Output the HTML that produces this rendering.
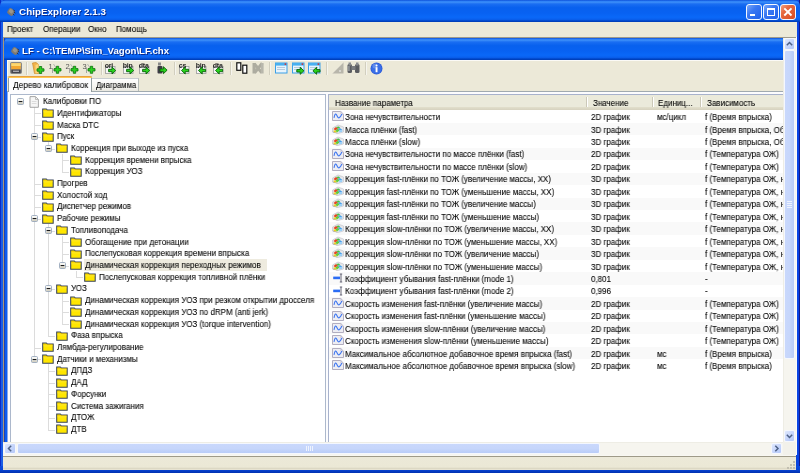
<!DOCTYPE html><html><head><meta charset="utf-8"><style>
*{margin:0;padding:0}
html,body{width:800px;height:473px;overflow:hidden;background:#ece9d8;position:relative;font-family:"Liberation Sans", sans-serif;}
.t{position:absolute;white-space:nowrap;font-size:8.5px;line-height:10px;color:#000;transform:scaleX(0.94);transform-origin:0 0;will-change:transform;-webkit-text-stroke:0.15px rgba(0,0,0,0.55)}
svg{position:absolute;display:block;overflow:visible;will-change:transform}
</style></head><body><div style="position:absolute;left:0px;top:0px;width:800px;height:473px;background:linear-gradient(90deg,#0a2cc8 0,#0a2cc8 1px,#1a5ee6 1.5px,#1a5ee6 3px,#0a46d8 3px,#0a46d8 797px,#0a44e4 797px,#0a44e4 798.5px,#101a90 799px);"></div>
<div style="position:absolute;left:0px;top:0px;width:800px;height:22px;background:linear-gradient(180deg,#0a4ad4 0%,#2a7ef6 5%,#3c8ef8 10%,#1a6ef2 18%,#0860ee 35%,#0862f2 60%,#0a68f8 78%,#0a60ee 88%,#0046c8 95%,#003ab0 100%);border-radius:6px 6px 0 0;"></div>
<svg style="left:5.5px;top:7px" width="10" height="10" viewBox="0 0 10 10"><rect x="1.6" y="1.8" width="6.8" height="6.4" rx="2" transform="rotate(35 5 5)" fill="#7c7872"/><rect x="2.6" y="2.6" width="4" height="3.6" rx="1.2" transform="rotate(35 5 5)" fill="#9a968c"/><path d="M7.5 3 L9 4.2 M8 5 L9.4 6.2 M7 7 L8.4 8.2" stroke="#2a2a40" stroke-width="0.9"/></svg>
<div class="t" style="left:19px;top:6.3px;font-weight:bold;font-size:9.8px;letter-spacing:0.06px;line-height:12px;color:#fff;text-shadow:1px 1px 0 #0a2a8a;transform:none;-webkit-text-stroke:0">ChipExplorer 2.1.3</div>
<div style="position:absolute;left:746px;top:3.5px;width:15.5px;height:16px;background:linear-gradient(135deg,#7aa8f8 0%,#3a78f2 40%,#2060ea 100%);border:1px solid #f4f8ff;border-radius:3px;box-sizing:border-box;"></div>
<div style="position:absolute;left:750px;top:13.5px;width:5px;height:2px;background:#fff;"></div>
<div style="position:absolute;left:763px;top:3.5px;width:15.5px;height:16px;background:linear-gradient(135deg,#7aa8f8 0%,#3a78f2 40%,#2060ea 100%);border:1px solid #f4f8ff;border-radius:3px;box-sizing:border-box;"></div>
<div style="position:absolute;left:766.8px;top:7.5px;width:8px;height:8px;border:1px solid #fff;border-top-width:2px;box-sizing:border-box;"></div>
<div style="position:absolute;left:780px;top:3.5px;width:15.5px;height:16px;background:linear-gradient(135deg,#f2a080 0%,#e6683e 35%,#d84c22 100%);border:1px solid #f4f8ff;border-radius:3px;box-sizing:border-box;"></div>
<svg style="left:780px;top:3.5px" width="16" height="16" viewBox="0 0 16 16"><path d="M4.3 4.3L11.5 11.5M11.5 4.3L4.3 11.5" stroke="#fff" stroke-width="1.9"/></svg>
<div style="position:absolute;left:3px;top:22px;width:794px;height:15px;background:#ece9d8;"></div>
<div class="t" style="left:7px;top:24.2px;">Проект</div>
<div class="t" style="left:43px;top:24.2px;">Операции</div>
<div class="t" style="left:88px;top:24.2px;">Окно</div>
<div class="t" style="left:116px;top:24.2px;">Помощь</div>
<div style="position:absolute;left:3px;top:37px;width:793px;height:1px;background:#9d9a8b;"></div>
<div style="position:absolute;left:3px;top:38px;width:793px;height:404px;background:#ece9d8;"></div>
<div style="position:absolute;left:3px;top:38px;width:780px;height:404px;background:linear-gradient(90deg,#a89878 0,#a89878 1px,#2040b0 1px,#2040b0 2px,#0a5cf0 2px);"></div>
<div style="position:absolute;left:4px;top:38px;width:779px;height:22px;background:linear-gradient(180deg,#0a4ad4 0%,#2a7ef6 5%,#3c8ef8 10%,#1a6ef2 18%,#0860ee 35%,#0862f2 60%,#0a68f8 78%,#0a60ee 88%,#0046c8 95%,#003ab0 100%);border-radius:5px 0 0 0;"></div>
<svg style="left:10px;top:45.5px" width="10" height="10" viewBox="0 0 10 10"><rect x="1.6" y="1.8" width="6.8" height="6.4" rx="2" transform="rotate(35 5 5)" fill="#7c7872"/><rect x="2.6" y="2.6" width="4" height="3.6" rx="1.2" transform="rotate(35 5 5)" fill="#9a968c"/><path d="M7.5 3 L9 4.2 M8 5 L9.4 6.2 M7 7 L8.4 8.2" stroke="#2a2a40" stroke-width="0.9"/></svg>
<div class="t" style="left:22px;top:45px;font-weight:bold;font-size:9.65px;letter-spacing:0px;line-height:12px;color:#fff;text-shadow:1px 1px 0 #0a2a8a;transform:none;-webkit-text-stroke:0">LF - C:\TEMP\Sim_Vagon\LF.chx</div>
<div style="position:absolute;left:7px;top:60px;width:776px;height:382px;background:#ece9d8;"></div>
<div style="position:absolute;left:7px;top:60px;width:776px;height:16px;background:#ece9d8;border-top:1px solid #fbfaf6;border-left:1px solid #fbfaf6;box-sizing:border-box;"></div>
<svg style="left:9.8px;top:62px" width="12" height="12" viewBox="0 0 12 12"><rect x="0.5" y="0.5" width="11" height="11" rx="1" fill="#9a9a9a" stroke="#7a7a7a" stroke-width="0.8"/><rect x="1.3" y="1.2" width="9.4" height="6.3" fill="#f4a830"/><rect x="1.3" y="1.2" width="9.4" height="2.8" fill="#fcd870"/><rect x="1.3" y="7.5" width="9.4" height="3.5" fill="#45454c"/><rect x="3" y="8.6" width="6" height="1.4" fill="#a8a8b0"/></svg>
<svg style="left:32px;top:62px" width="13" height="12" viewBox="0 0 13 12"><path d="M0.5 1 L4 0.5 L6.5 2.5 L6.5 11.5 L2.5 11.5 Z" fill="#f3b44a" stroke="#c98a28" stroke-width="0.7"/><path d="M3.5 3 L6.5 2 L6.5 11 L3.5 11.5Z" fill="#fcd77a"/><path d="M5.0 6.8h2.3v-2.3h2.4v2.3h2.3v2.4h-2.3v2.3h-2.4v-2.3h-2.3z" fill="#2ad020" stroke="#0b700b" stroke-width="0.8"/></svg>
<svg style="left:48.75px;top:62px" width="13" height="12" viewBox="0 0 13 12"><text x="-0.5" y="6.5" font-family="Liberation Sans" font-size="7.5" fill="#555">1</text><path d="M4.5 2 L7 6" stroke="#a8a8a8" stroke-width="0.8"/><path d="M3.5 6 L3.5 11" stroke="#909090" stroke-width="0.8"/><path d="M5.0 6.6h2.3v-2.3h2.4v2.3h2.3v2.4h-2.3v2.3h-2.4v-2.3h-2.3z" fill="#2ad020" stroke="#0b700b" stroke-width="0.8"/></svg>
<svg style="left:65.6px;top:62px" width="13" height="12" viewBox="0 0 13 12"><text x="-0.5" y="6.5" font-family="Liberation Sans" font-size="7.5" fill="#555">2</text><path d="M4.5 2 L7 6" stroke="#a8a8a8" stroke-width="0.8"/><path d="M3.5 6 L3.5 11" stroke="#909090" stroke-width="0.8"/><path d="M5.0 6.6h2.3v-2.3h2.4v2.3h2.3v2.4h-2.3v2.3h-2.4v-2.3h-2.3z" fill="#2ad020" stroke="#0b700b" stroke-width="0.8"/></svg>
<svg style="left:82.5px;top:62px" width="13" height="12" viewBox="0 0 13 12"><text x="-0.5" y="6.5" font-family="Liberation Sans" font-size="7.5" fill="#555">3</text><path d="M4.5 2 L7 6" stroke="#a8a8a8" stroke-width="0.8"/><path d="M3.5 6 L3.5 11" stroke="#909090" stroke-width="0.8"/><path d="M5.0 6.6h2.3v-2.3h2.4v2.3h2.3v2.4h-2.3v2.3h-2.4v-2.3h-2.3z" fill="#2ad020" stroke="#0b700b" stroke-width="0.8"/></svg>
<svg style="left:105.4px;top:62px" width="13" height="12" viewBox="0 0 13 12"><rect x="0.5" y="4.5" width="9.5" height="7" fill="#f6f6f6" stroke="#9a9a9a" stroke-width="0.8"/><text x="-0.3" y="5.6" font-family="Liberation Sans" font-weight="bold" font-size="7" letter-spacing="-0.2" fill="#2a2a2a">ori</text><path d="M3.6 7.3h3.4v-2.3l3.7 3.5l-3.7 3.5v-2.3h-3.4z" fill="#2ad41e" stroke="#086008" stroke-width="0.9"/></svg>
<svg style="left:122.5px;top:62px" width="13" height="12" viewBox="0 0 13 12"><rect x="0.5" y="4.5" width="9.5" height="7" fill="#f6f6f6" stroke="#9a9a9a" stroke-width="0.8"/><text x="-0.3" y="5.6" font-family="Liberation Sans" font-weight="bold" font-size="7" letter-spacing="-0.2" fill="#2a2a2a">bin</text><path d="M3.6 7.3h3.4v-2.3l3.7 3.5l-3.7 3.5v-2.3h-3.4z" fill="#2ad41e" stroke="#086008" stroke-width="0.9"/></svg>
<svg style="left:139.4px;top:62px" width="13" height="12" viewBox="0 0 13 12"><rect x="0.5" y="4.5" width="9.5" height="7" fill="#f6f6f6" stroke="#9a9a9a" stroke-width="0.8"/><text x="-0.3" y="5.6" font-family="Liberation Sans" font-weight="bold" font-size="7" letter-spacing="-0.2" fill="#2a2a2a">dta</text><path d="M3.6 7.3h3.4v-2.3l3.7 3.5l-3.7 3.5v-2.3h-3.4z" fill="#2ad41e" stroke="#086008" stroke-width="0.9"/></svg>
<svg style="left:157px;top:62px" width="12" height="12" viewBox="0 0 12 12"><rect x="1" y="0.5" width="3" height="3" fill="#8a8a8a"/><rect x="0.5" y="4" width="5" height="7.5" rx="1" fill="#3c3c44"/><path d="M3 7.0h3.4v-2.3l3.7 3.5l-3.7 3.5v-2.3h-3.4z" fill="#2ad41e" stroke="#086008" stroke-width="0.9"/></svg>
<svg style="left:178.75px;top:62px" width="13" height="12" viewBox="0 0 13 12"><rect x="0.5" y="4.5" width="9.5" height="7" fill="#f6f6f6" stroke="#9a9a9a" stroke-width="0.8"/><text x="-0.3" y="5.6" font-family="Liberation Sans" font-weight="bold" font-size="7" letter-spacing="-0.2" fill="#2a2a2a">cs</text><path d="M9.600000000000001 7.3h-3.4v-2.3l-3.7 3.5l3.7 3.5v-2.3h3.4z" fill="#2ad41e" stroke="#086008" stroke-width="0.9"/></svg>
<svg style="left:195.6px;top:62px" width="13" height="12" viewBox="0 0 13 12"><rect x="0.5" y="4.5" width="9.5" height="7" fill="#f6f6f6" stroke="#9a9a9a" stroke-width="0.8"/><text x="-0.3" y="5.6" font-family="Liberation Sans" font-weight="bold" font-size="7" letter-spacing="-0.2" fill="#2a2a2a">bin</text><path d="M9.600000000000001 7.3h-3.4v-2.3l-3.7 3.5l3.7 3.5v-2.3h3.4z" fill="#2ad41e" stroke="#086008" stroke-width="0.9"/></svg>
<svg style="left:212.5px;top:62px" width="13" height="12" viewBox="0 0 13 12"><rect x="0.5" y="4.5" width="9.5" height="7" fill="#f6f6f6" stroke="#9a9a9a" stroke-width="0.8"/><text x="-0.3" y="5.6" font-family="Liberation Sans" font-weight="bold" font-size="7" letter-spacing="-0.2" fill="#2a2a2a">dta</text><path d="M9.600000000000001 7.3h-3.4v-2.3l-3.7 3.5l3.7 3.5v-2.3h3.4z" fill="#2ad41e" stroke="#086008" stroke-width="0.9"/></svg>
<svg style="left:235.6px;top:62px" width="12" height="12" viewBox="0 0 12 12"><rect x="0.8" y="0.8" width="4" height="7.5" fill="#fff" stroke="#111" stroke-width="1.2"/><rect x="6.8" y="3.2" width="4" height="8" fill="#fff" stroke="#111" stroke-width="1.2"/></svg>
<svg style="left:251.9px;top:62px" width="12" height="12" viewBox="0 0 12 12"><path d="M0.5 1h3.2v10.5h-3.2z" fill="#adaca0"/><path d="M2.2 1.6 L9.8 10.8 M10.2 1.2 L2.6 10.8" stroke="#adaca0" stroke-width="3"/><path d="M9 1h2.6v10.5h-2.6z" fill="#b8b7ac"/></svg>
<svg style="left:275.2px;top:62px" width="13" height="12" viewBox="0 0 13 12"><rect x="0.5" y="1" width="11.5" height="10" fill="#e8f4fc" stroke="#3aa0e8" stroke-width="1"/><rect x="0.5" y="1" width="11.5" height="2.6" fill="#48b0f0"/><rect x="9.6" y="1.4" width="1.6" height="1.4" fill="#e02020"/><path d="M2 5.5h8M2 7.5h8" stroke="#a0b8d0" stroke-width="0.7"/></svg>
<svg style="left:291.7px;top:62px" width="13" height="12" viewBox="0 0 13 12"><rect x="0.5" y="1" width="11.5" height="10" fill="#e8f4fc" stroke="#3aa0e8" stroke-width="1"/><rect x="0.5" y="1" width="11.5" height="2.6" fill="#48b0f0"/><rect x="9.6" y="1.4" width="1.6" height="1.4" fill="#e02020"/><path d="M2 5.5h8M2 7.5h8" stroke="#a0b8d0" stroke-width="0.7"/><path d="M4.8 7.6h3.4v-2.3l3.7 3.5l-3.7 3.5v-2.3h-3.4z" fill="#2ad41e" stroke="#086008" stroke-width="0.9"/></svg>
<svg style="left:308.2px;top:62px" width="13" height="12" viewBox="0 0 13 12"><rect x="0.5" y="1" width="11.5" height="10" fill="#e8f4fc" stroke="#3aa0e8" stroke-width="1"/><rect x="0.5" y="1" width="11.5" height="2.6" fill="#48b0f0"/><rect x="9.6" y="1.4" width="1.6" height="1.4" fill="#e02020"/><path d="M2 5.5h8M2 7.5h8" stroke="#a0b8d0" stroke-width="0.7"/><path d="M12.0 7.6h-3.4v-2.3l-3.7 3.5l3.7 3.5v-2.3h3.4z" fill="#2ad41e" stroke="#086008" stroke-width="0.9"/></svg>
<svg style="left:331.5px;top:62px" width="12" height="12" viewBox="0 0 12 12"><path d="M11.5 0.5 V11.5 H0.5 Z" fill="#b8b6ab"/><path d="M11.5 0.5 L0.5 11.5" stroke="#d6d4ca" stroke-width="0.6"/><circle cx="8" cy="9" r="0.8" fill="#fff"/></svg>
<svg style="left:347.2px;top:62px" width="13" height="12" viewBox="0 0 13 12"><rect x="0.5" y="2" width="4.5" height="9" rx="1.5" fill="#5a5c60"/><rect x="8" y="2" width="4.5" height="9" rx="1.5" fill="#5a5c60"/><rect x="4.5" y="4" width="4" height="4" fill="#7a7c80"/><rect x="1.5" y="0.5" width="2.5" height="3" fill="#8a8c90"/><rect x="9" y="0.5" width="2.5" height="3" fill="#8a8c90"/><rect x="1.3" y="4" width="1.3" height="5" fill="#a0a4a8"/></svg>
<svg style="left:370.4px;top:61.5px" width="13" height="13" viewBox="0 0 13 13"><circle cx="6.5" cy="6.5" r="6" fill="#2a5ad8"/><circle cx="6.5" cy="6.5" r="5.2" fill="#3a6ee6"/><circle cx="5" cy="4" r="2.5" fill="#7aa0f0" opacity="0.6"/><rect x="5.6" y="5.2" width="1.9" height="5" fill="#fff"/><circle cx="6.55" cy="3.4" r="1" fill="#fff"/></svg>
<div style="position:absolute;left:25.6px;top:61.5px;width:1px;height:13px;background:#d2cfbf;border-right:1px solid #f6f5ee;"></div>
<div style="position:absolute;left:101px;top:61.5px;width:1px;height:13px;background:#d2cfbf;border-right:1px solid #f6f5ee;"></div>
<div style="position:absolute;left:173.75px;top:61.5px;width:1px;height:13px;background:#d2cfbf;border-right:1px solid #f6f5ee;"></div>
<div style="position:absolute;left:230px;top:61.5px;width:1px;height:13px;background:#d2cfbf;border-right:1px solid #f6f5ee;"></div>
<div style="position:absolute;left:269.4px;top:61.5px;width:1px;height:13px;background:#d2cfbf;border-right:1px solid #f6f5ee;"></div>
<div style="position:absolute;left:325.5px;top:61.5px;width:1px;height:13px;background:#d2cfbf;border-right:1px solid #f6f5ee;"></div>
<div style="position:absolute;left:365.2px;top:61.5px;width:1px;height:13px;background:#d2cfbf;border-right:1px solid #f6f5ee;"></div>
<div style="position:absolute;left:7px;top:91px;width:776px;height:1px;background:#a0aab0;"></div>
<div style="position:absolute;left:7px;top:92px;width:776px;height:350px;background:linear-gradient(90deg,#4a7ee8 0,#c8d4f0 1px,#fcfcfe 1px);"></div>
<div style="position:absolute;left:8px;top:76px;width:84px;height:16px;background:#fcfcfe;border:1px solid #919b9c;border-bottom:none;border-top:none;border-radius:2px 2px 0 0;box-sizing:border-box;"></div>
<div style="position:absolute;left:8px;top:76px;width:84px;height:2px;background:linear-gradient(180deg,#e8a040 0 1px,#ffc850 1px 2px);border-radius:2px 2px 0 0;"></div>
<div style="position:absolute;left:92px;top:78px;width:47px;height:13px;background:linear-gradient(#fefefe,#f4f3ee 70%,#e8e7e0);border:1px solid #b6bbb8;border-bottom:none;border-left:none;border-top:1px solid #c8cdd0;box-sizing:border-box;"></div>
<div class="t" style="left:13px;top:80px;transform:scaleX(0.975)">Дерево калибровок</div>
<div class="t" style="left:95.7px;top:79.6px;transform:scaleX(0.91)">Диаграмма</div>
<div style="position:absolute;left:10px;top:94px;width:316px;height:348px;background:#fff;border:1px solid #acb8cc;border-bottom:none;box-sizing:border-box;"></div>
<div style="position:absolute;left:328px;top:94px;width:455px;height:348px;background:#fff;border:1px solid #a8b2cc;border-bottom:none;border-right:none;box-sizing:border-box;"></div>
<div style="position:absolute;left:329px;top:95px;width:454px;height:15px;background:linear-gradient(180deg,#ebeadb 0,#ebeadb 12px,#e2dfcc 12px,#d6d2bf 15px);"></div>
<div style="position:absolute;left:0;top:0;width:783px;height:442px;overflow:hidden">
<div class="t" style="left:335px;top:98.3px;">Название параметра</div>
<div class="t" style="left:593px;top:98.3px;">Значение</div>
<div class="t" style="left:658px;top:98.3px;">Единиц...</div>
<div class="t" style="left:707px;top:98.3px;">Зависимость</div>
<div style="position:absolute;left:585.5px;top:97px;width:1px;height:10px;background:#cbc8b8;border-right:1px solid #fff;"></div>
<div style="position:absolute;left:651.5px;top:97px;width:1px;height:10px;background:#cbc8b8;border-right:1px solid #fff;"></div>
<div style="position:absolute;left:699.5px;top:97px;width:1px;height:10px;background:#cbc8b8;border-right:1px solid #fff;"></div>
<svg style="left:332px;top:111.3px" width="12" height="10" viewBox="0 0 12 10"><path d="M0.5 0.5 H8.8 L11.5 3.2 V9.5 H0.5 Z" fill="#ededf3" stroke="#aaa6ba" stroke-width="0.9"/><path d="M8.8 0.5 V3.2 H11.5" fill="none" stroke="#c4c0d0" stroke-width="0.7"/><path d="M2 6.8 C2.9 2.2,4 2,5 4.8 S7.6 8.2,9.9 3" fill="none" stroke="#4078f0" stroke-width="1.1"/></svg>
<div class="t" style="left:345px;top:112.1px;">Зона нечувствительности</div>
<div class="t" style="left:591px;top:112.1px;">2D график</div>
<div class="t" style="left:656.5px;top:112.1px;">мс/цикл</div>
<div class="t" style="left:704.6px;top:112.1px;">f (Время впрыска)</div>
<div style="position:absolute;left:329px;top:122.85px;width:454px;height:12.45px;background:#f9f9f9;"></div>
<svg style="left:332px;top:123.75px" width="12" height="10" viewBox="0 0 12 10"><path d="M0.5 4 L6 1 L11.5 3 V8 L6 9.5 L0.5 8 Z" fill="#e6e6ea" stroke="#c0c0c8" stroke-width="0.6"/><path d="M0.8 7.5 L5.5 9.2 L5.5 9.6 L0.8 8.3Z" fill="#9a9a9a"/><path d="M1.5 5 L4 3 L6 4.5 L3.5 6.5 Z" fill="#e84422"/><path d="M1.5 6.5 L3.5 6.5 L5 8.6 L2 8.2 Z" fill="#f0d020"/><path d="M4 3 L7 2.5 L8.5 4.5 L6 4.5 Z" fill="#48c040"/><path d="M3.5 6.5 L6 4.5 L7.5 6.5 L5 8.6 Z" fill="#60cc40"/><path d="M6 4.5 L8.5 4.5 L10.5 6 L7.5 6.5 Z" fill="#48a0f0"/><path d="M7.5 6.5 L10.5 6 L10 8 L6.8 8.4 Z" fill="#98d0f8"/></svg>
<div class="t" style="left:345px;top:124.55px;">Масса плёнки (fast)</div>
<div class="t" style="left:591px;top:124.55px;">3D график</div>
<div class="t" style="left:704.6px;top:124.55px;">f (Время впрыска, Об</div>
<svg style="left:332px;top:136.2px" width="12" height="10" viewBox="0 0 12 10"><path d="M0.5 4 L6 1 L11.5 3 V8 L6 9.5 L0.5 8 Z" fill="#e6e6ea" stroke="#c0c0c8" stroke-width="0.6"/><path d="M0.8 7.5 L5.5 9.2 L5.5 9.6 L0.8 8.3Z" fill="#9a9a9a"/><path d="M1.5 5 L4 3 L6 4.5 L3.5 6.5 Z" fill="#e84422"/><path d="M1.5 6.5 L3.5 6.5 L5 8.6 L2 8.2 Z" fill="#f0d020"/><path d="M4 3 L7 2.5 L8.5 4.5 L6 4.5 Z" fill="#48c040"/><path d="M3.5 6.5 L6 4.5 L7.5 6.5 L5 8.6 Z" fill="#60cc40"/><path d="M6 4.5 L8.5 4.5 L10.5 6 L7.5 6.5 Z" fill="#48a0f0"/><path d="M7.5 6.5 L10.5 6 L10 8 L6.8 8.4 Z" fill="#98d0f8"/></svg>
<div class="t" style="left:345px;top:137.0px;">Масса плёнки (slow)</div>
<div class="t" style="left:591px;top:137.0px;">3D график</div>
<div class="t" style="left:704.6px;top:137.0px;">f (Время впрыска, Об</div>
<div style="position:absolute;left:329px;top:147.75px;width:454px;height:12.45px;background:#f9f9f9;"></div>
<svg style="left:332px;top:148.65px" width="12" height="10" viewBox="0 0 12 10"><path d="M0.5 0.5 H8.8 L11.5 3.2 V9.5 H0.5 Z" fill="#ededf3" stroke="#aaa6ba" stroke-width="0.9"/><path d="M8.8 0.5 V3.2 H11.5" fill="none" stroke="#c4c0d0" stroke-width="0.7"/><path d="M2 6.8 C2.9 2.2,4 2,5 4.8 S7.6 8.2,9.9 3" fill="none" stroke="#4078f0" stroke-width="1.1"/></svg>
<div class="t" style="left:345px;top:149.45px;">Зона нечувствительности по массе плёнки (fast)</div>
<div class="t" style="left:591px;top:149.45px;">2D график</div>
<div class="t" style="left:704.6px;top:149.45px;">f (Температура ОЖ)</div>
<svg style="left:332px;top:161.1px" width="12" height="10" viewBox="0 0 12 10"><path d="M0.5 0.5 H8.8 L11.5 3.2 V9.5 H0.5 Z" fill="#ededf3" stroke="#aaa6ba" stroke-width="0.9"/><path d="M8.8 0.5 V3.2 H11.5" fill="none" stroke="#c4c0d0" stroke-width="0.7"/><path d="M2 6.8 C2.9 2.2,4 2,5 4.8 S7.6 8.2,9.9 3" fill="none" stroke="#4078f0" stroke-width="1.1"/></svg>
<div class="t" style="left:345px;top:161.9px;">Зона нечувствительности по массе плёнки (slow)</div>
<div class="t" style="left:591px;top:161.9px;">2D график</div>
<div class="t" style="left:704.6px;top:161.9px;">f (Температура ОЖ)</div>
<div style="position:absolute;left:329px;top:172.65px;width:454px;height:12.45px;background:#f9f9f9;"></div>
<svg style="left:332px;top:173.55px" width="12" height="10" viewBox="0 0 12 10"><path d="M0.5 4 L6 1 L11.5 3 V8 L6 9.5 L0.5 8 Z" fill="#e6e6ea" stroke="#c0c0c8" stroke-width="0.6"/><path d="M0.8 7.5 L5.5 9.2 L5.5 9.6 L0.8 8.3Z" fill="#9a9a9a"/><path d="M1.5 5 L4 3 L6 4.5 L3.5 6.5 Z" fill="#e84422"/><path d="M1.5 6.5 L3.5 6.5 L5 8.6 L2 8.2 Z" fill="#f0d020"/><path d="M4 3 L7 2.5 L8.5 4.5 L6 4.5 Z" fill="#48c040"/><path d="M3.5 6.5 L6 4.5 L7.5 6.5 L5 8.6 Z" fill="#60cc40"/><path d="M6 4.5 L8.5 4.5 L10.5 6 L7.5 6.5 Z" fill="#48a0f0"/><path d="M7.5 6.5 L10.5 6 L10 8 L6.8 8.4 Z" fill="#98d0f8"/></svg>
<div class="t" style="left:345px;top:174.35px;">Коррекция fast-плёнки по ТОЖ (увеличение массы, XX)</div>
<div class="t" style="left:591px;top:174.35px;">3D график</div>
<div class="t" style="left:704.6px;top:174.35px;">f (Температура ОЖ, н</div>
<svg style="left:332px;top:186.0px" width="12" height="10" viewBox="0 0 12 10"><path d="M0.5 4 L6 1 L11.5 3 V8 L6 9.5 L0.5 8 Z" fill="#e6e6ea" stroke="#c0c0c8" stroke-width="0.6"/><path d="M0.8 7.5 L5.5 9.2 L5.5 9.6 L0.8 8.3Z" fill="#9a9a9a"/><path d="M1.5 5 L4 3 L6 4.5 L3.5 6.5 Z" fill="#e84422"/><path d="M1.5 6.5 L3.5 6.5 L5 8.6 L2 8.2 Z" fill="#f0d020"/><path d="M4 3 L7 2.5 L8.5 4.5 L6 4.5 Z" fill="#48c040"/><path d="M3.5 6.5 L6 4.5 L7.5 6.5 L5 8.6 Z" fill="#60cc40"/><path d="M6 4.5 L8.5 4.5 L10.5 6 L7.5 6.5 Z" fill="#48a0f0"/><path d="M7.5 6.5 L10.5 6 L10 8 L6.8 8.4 Z" fill="#98d0f8"/></svg>
<div class="t" style="left:345px;top:186.8px;">Коррекция fast-плёнки по ТОЖ (уменьшение массы, XX)</div>
<div class="t" style="left:591px;top:186.8px;">3D график</div>
<div class="t" style="left:704.6px;top:186.8px;">f (Температура ОЖ, н</div>
<div style="position:absolute;left:329px;top:197.55px;width:454px;height:12.45px;background:#f9f9f9;"></div>
<svg style="left:332px;top:198.45px" width="12" height="10" viewBox="0 0 12 10"><path d="M0.5 4 L6 1 L11.5 3 V8 L6 9.5 L0.5 8 Z" fill="#e6e6ea" stroke="#c0c0c8" stroke-width="0.6"/><path d="M0.8 7.5 L5.5 9.2 L5.5 9.6 L0.8 8.3Z" fill="#9a9a9a"/><path d="M1.5 5 L4 3 L6 4.5 L3.5 6.5 Z" fill="#e84422"/><path d="M1.5 6.5 L3.5 6.5 L5 8.6 L2 8.2 Z" fill="#f0d020"/><path d="M4 3 L7 2.5 L8.5 4.5 L6 4.5 Z" fill="#48c040"/><path d="M3.5 6.5 L6 4.5 L7.5 6.5 L5 8.6 Z" fill="#60cc40"/><path d="M6 4.5 L8.5 4.5 L10.5 6 L7.5 6.5 Z" fill="#48a0f0"/><path d="M7.5 6.5 L10.5 6 L10 8 L6.8 8.4 Z" fill="#98d0f8"/></svg>
<div class="t" style="left:345px;top:199.25px;">Коррекция fast-плёнки по ТОЖ (увеличение массы)</div>
<div class="t" style="left:591px;top:199.25px;">3D график</div>
<div class="t" style="left:704.6px;top:199.25px;">f (Температура ОЖ, н</div>
<svg style="left:332px;top:210.9px" width="12" height="10" viewBox="0 0 12 10"><path d="M0.5 4 L6 1 L11.5 3 V8 L6 9.5 L0.5 8 Z" fill="#e6e6ea" stroke="#c0c0c8" stroke-width="0.6"/><path d="M0.8 7.5 L5.5 9.2 L5.5 9.6 L0.8 8.3Z" fill="#9a9a9a"/><path d="M1.5 5 L4 3 L6 4.5 L3.5 6.5 Z" fill="#e84422"/><path d="M1.5 6.5 L3.5 6.5 L5 8.6 L2 8.2 Z" fill="#f0d020"/><path d="M4 3 L7 2.5 L8.5 4.5 L6 4.5 Z" fill="#48c040"/><path d="M3.5 6.5 L6 4.5 L7.5 6.5 L5 8.6 Z" fill="#60cc40"/><path d="M6 4.5 L8.5 4.5 L10.5 6 L7.5 6.5 Z" fill="#48a0f0"/><path d="M7.5 6.5 L10.5 6 L10 8 L6.8 8.4 Z" fill="#98d0f8"/></svg>
<div class="t" style="left:345px;top:211.7px;">Коррекция fast-плёнки по ТОЖ (уменьшение массы)</div>
<div class="t" style="left:591px;top:211.7px;">3D график</div>
<div class="t" style="left:704.6px;top:211.7px;">f (Температура ОЖ, н</div>
<div style="position:absolute;left:329px;top:222.45px;width:454px;height:12.45px;background:#f9f9f9;"></div>
<svg style="left:332px;top:223.35px" width="12" height="10" viewBox="0 0 12 10"><path d="M0.5 4 L6 1 L11.5 3 V8 L6 9.5 L0.5 8 Z" fill="#e6e6ea" stroke="#c0c0c8" stroke-width="0.6"/><path d="M0.8 7.5 L5.5 9.2 L5.5 9.6 L0.8 8.3Z" fill="#9a9a9a"/><path d="M1.5 5 L4 3 L6 4.5 L3.5 6.5 Z" fill="#e84422"/><path d="M1.5 6.5 L3.5 6.5 L5 8.6 L2 8.2 Z" fill="#f0d020"/><path d="M4 3 L7 2.5 L8.5 4.5 L6 4.5 Z" fill="#48c040"/><path d="M3.5 6.5 L6 4.5 L7.5 6.5 L5 8.6 Z" fill="#60cc40"/><path d="M6 4.5 L8.5 4.5 L10.5 6 L7.5 6.5 Z" fill="#48a0f0"/><path d="M7.5 6.5 L10.5 6 L10 8 L6.8 8.4 Z" fill="#98d0f8"/></svg>
<div class="t" style="left:345px;top:224.15px;">Коррекция slow-плёнки по ТОЖ (увеличение массы, XX)</div>
<div class="t" style="left:591px;top:224.15px;">3D график</div>
<div class="t" style="left:704.6px;top:224.15px;">f (Температура ОЖ, н</div>
<svg style="left:332px;top:235.8px" width="12" height="10" viewBox="0 0 12 10"><path d="M0.5 4 L6 1 L11.5 3 V8 L6 9.5 L0.5 8 Z" fill="#e6e6ea" stroke="#c0c0c8" stroke-width="0.6"/><path d="M0.8 7.5 L5.5 9.2 L5.5 9.6 L0.8 8.3Z" fill="#9a9a9a"/><path d="M1.5 5 L4 3 L6 4.5 L3.5 6.5 Z" fill="#e84422"/><path d="M1.5 6.5 L3.5 6.5 L5 8.6 L2 8.2 Z" fill="#f0d020"/><path d="M4 3 L7 2.5 L8.5 4.5 L6 4.5 Z" fill="#48c040"/><path d="M3.5 6.5 L6 4.5 L7.5 6.5 L5 8.6 Z" fill="#60cc40"/><path d="M6 4.5 L8.5 4.5 L10.5 6 L7.5 6.5 Z" fill="#48a0f0"/><path d="M7.5 6.5 L10.5 6 L10 8 L6.8 8.4 Z" fill="#98d0f8"/></svg>
<div class="t" style="left:345px;top:236.6px;">Коррекция slow-плёнки по ТОЖ (уменьшение массы, XX)</div>
<div class="t" style="left:591px;top:236.6px;">3D график</div>
<div class="t" style="left:704.6px;top:236.6px;">f (Температура ОЖ, н</div>
<div style="position:absolute;left:329px;top:247.35px;width:454px;height:12.45px;background:#f9f9f9;"></div>
<svg style="left:332px;top:248.25px" width="12" height="10" viewBox="0 0 12 10"><path d="M0.5 4 L6 1 L11.5 3 V8 L6 9.5 L0.5 8 Z" fill="#e6e6ea" stroke="#c0c0c8" stroke-width="0.6"/><path d="M0.8 7.5 L5.5 9.2 L5.5 9.6 L0.8 8.3Z" fill="#9a9a9a"/><path d="M1.5 5 L4 3 L6 4.5 L3.5 6.5 Z" fill="#e84422"/><path d="M1.5 6.5 L3.5 6.5 L5 8.6 L2 8.2 Z" fill="#f0d020"/><path d="M4 3 L7 2.5 L8.5 4.5 L6 4.5 Z" fill="#48c040"/><path d="M3.5 6.5 L6 4.5 L7.5 6.5 L5 8.6 Z" fill="#60cc40"/><path d="M6 4.5 L8.5 4.5 L10.5 6 L7.5 6.5 Z" fill="#48a0f0"/><path d="M7.5 6.5 L10.5 6 L10 8 L6.8 8.4 Z" fill="#98d0f8"/></svg>
<div class="t" style="left:345px;top:249.05px;">Коррекция slow-плёнки по ТОЖ (увеличение массы)</div>
<div class="t" style="left:591px;top:249.05px;">3D график</div>
<div class="t" style="left:704.6px;top:249.05px;">f (Температура ОЖ, н</div>
<svg style="left:332px;top:260.7px" width="12" height="10" viewBox="0 0 12 10"><path d="M0.5 4 L6 1 L11.5 3 V8 L6 9.5 L0.5 8 Z" fill="#e6e6ea" stroke="#c0c0c8" stroke-width="0.6"/><path d="M0.8 7.5 L5.5 9.2 L5.5 9.6 L0.8 8.3Z" fill="#9a9a9a"/><path d="M1.5 5 L4 3 L6 4.5 L3.5 6.5 Z" fill="#e84422"/><path d="M1.5 6.5 L3.5 6.5 L5 8.6 L2 8.2 Z" fill="#f0d020"/><path d="M4 3 L7 2.5 L8.5 4.5 L6 4.5 Z" fill="#48c040"/><path d="M3.5 6.5 L6 4.5 L7.5 6.5 L5 8.6 Z" fill="#60cc40"/><path d="M6 4.5 L8.5 4.5 L10.5 6 L7.5 6.5 Z" fill="#48a0f0"/><path d="M7.5 6.5 L10.5 6 L10 8 L6.8 8.4 Z" fill="#98d0f8"/></svg>
<div class="t" style="left:345px;top:261.5px;">Коррекция slow-плёнки по ТОЖ (уменьшение массы)</div>
<div class="t" style="left:591px;top:261.5px;">3D график</div>
<div class="t" style="left:704.6px;top:261.5px;">f (Температура ОЖ, н</div>
<div style="position:absolute;left:329px;top:272.25px;width:454px;height:12.45px;background:#f9f9f9;"></div>
<svg style="left:332px;top:273.15px" width="12" height="10" viewBox="0 0 12 10"><rect x="1.2" y="3.6" width="6.8" height="2.6" fill="#2a6cf4"/><path d="M9 1 V9 M7.8 1 H10.2 M7.8 9 H10.2" stroke="#58586a" stroke-width="0.9"/></svg>
<div class="t" style="left:345px;top:273.95px;">Коэффициент убывания fast-плёнки (mode 1)</div>
<div class="t" style="left:591px;top:273.95px;">0,801</div>
<div class="t" style="left:704.6px;top:273.95px;">-</div>
<svg style="left:332px;top:285.6px" width="12" height="10" viewBox="0 0 12 10"><rect x="1.2" y="3.6" width="6.8" height="2.6" fill="#2a6cf4"/><path d="M9 1 V9 M7.8 1 H10.2 M7.8 9 H10.2" stroke="#58586a" stroke-width="0.9"/></svg>
<div class="t" style="left:345px;top:286.4px;">Коэффициент убывания fast-плёнки (mode 2)</div>
<div class="t" style="left:591px;top:286.4px;">0,996</div>
<div class="t" style="left:704.6px;top:286.4px;">-</div>
<div style="position:absolute;left:329px;top:297.15px;width:454px;height:12.45px;background:#f9f9f9;"></div>
<svg style="left:332px;top:298.05px" width="12" height="10" viewBox="0 0 12 10"><path d="M0.5 0.5 H8.8 L11.5 3.2 V9.5 H0.5 Z" fill="#ededf3" stroke="#aaa6ba" stroke-width="0.9"/><path d="M8.8 0.5 V3.2 H11.5" fill="none" stroke="#c4c0d0" stroke-width="0.7"/><path d="M2 6.8 C2.9 2.2,4 2,5 4.8 S7.6 8.2,9.9 3" fill="none" stroke="#4078f0" stroke-width="1.1"/></svg>
<div class="t" style="left:345px;top:298.85px;">Скорость изменения fast-плёнки (увеличение массы)</div>
<div class="t" style="left:591px;top:298.85px;">2D график</div>
<div class="t" style="left:704.6px;top:298.85px;">f (Температура ОЖ)</div>
<svg style="left:332px;top:310.5px" width="12" height="10" viewBox="0 0 12 10"><path d="M0.5 0.5 H8.8 L11.5 3.2 V9.5 H0.5 Z" fill="#ededf3" stroke="#aaa6ba" stroke-width="0.9"/><path d="M8.8 0.5 V3.2 H11.5" fill="none" stroke="#c4c0d0" stroke-width="0.7"/><path d="M2 6.8 C2.9 2.2,4 2,5 4.8 S7.6 8.2,9.9 3" fill="none" stroke="#4078f0" stroke-width="1.1"/></svg>
<div class="t" style="left:345px;top:311.3px;">Скорость изменения fast-плёнки (уменьшение массы)</div>
<div class="t" style="left:591px;top:311.3px;">2D график</div>
<div class="t" style="left:704.6px;top:311.3px;">f (Температура ОЖ)</div>
<div style="position:absolute;left:329px;top:322.05px;width:454px;height:12.45px;background:#f9f9f9;"></div>
<svg style="left:332px;top:322.95px" width="12" height="10" viewBox="0 0 12 10"><path d="M0.5 0.5 H8.8 L11.5 3.2 V9.5 H0.5 Z" fill="#ededf3" stroke="#aaa6ba" stroke-width="0.9"/><path d="M8.8 0.5 V3.2 H11.5" fill="none" stroke="#c4c0d0" stroke-width="0.7"/><path d="M2 6.8 C2.9 2.2,4 2,5 4.8 S7.6 8.2,9.9 3" fill="none" stroke="#4078f0" stroke-width="1.1"/></svg>
<div class="t" style="left:345px;top:323.75px;">Скорость изменения slow-плёнки (увеличение массы)</div>
<div class="t" style="left:591px;top:323.75px;">2D график</div>
<div class="t" style="left:704.6px;top:323.75px;">f (Температура ОЖ)</div>
<svg style="left:332px;top:335.4px" width="12" height="10" viewBox="0 0 12 10"><path d="M0.5 0.5 H8.8 L11.5 3.2 V9.5 H0.5 Z" fill="#ededf3" stroke="#aaa6ba" stroke-width="0.9"/><path d="M8.8 0.5 V3.2 H11.5" fill="none" stroke="#c4c0d0" stroke-width="0.7"/><path d="M2 6.8 C2.9 2.2,4 2,5 4.8 S7.6 8.2,9.9 3" fill="none" stroke="#4078f0" stroke-width="1.1"/></svg>
<div class="t" style="left:345px;top:336.2px;">Скорость изменения slow-плёнки (уменьшение массы)</div>
<div class="t" style="left:591px;top:336.2px;">2D график</div>
<div class="t" style="left:704.6px;top:336.2px;">f (Температура ОЖ)</div>
<div style="position:absolute;left:329px;top:346.95px;width:454px;height:12.45px;background:#f9f9f9;"></div>
<svg style="left:332px;top:347.85px" width="12" height="10" viewBox="0 0 12 10"><path d="M0.5 0.5 H8.8 L11.5 3.2 V9.5 H0.5 Z" fill="#ededf3" stroke="#aaa6ba" stroke-width="0.9"/><path d="M8.8 0.5 V3.2 H11.5" fill="none" stroke="#c4c0d0" stroke-width="0.7"/><path d="M2 6.8 C2.9 2.2,4 2,5 4.8 S7.6 8.2,9.9 3" fill="none" stroke="#4078f0" stroke-width="1.1"/></svg>
<div class="t" style="left:345px;top:348.65px;">Максимальное абсолютное добавочное время впрыска (fast)</div>
<div class="t" style="left:591px;top:348.65px;">2D график</div>
<div class="t" style="left:656.5px;top:348.65px;">мс</div>
<div class="t" style="left:704.6px;top:348.65px;">f (Время впрыска)</div>
<svg style="left:332px;top:360.3px" width="12" height="10" viewBox="0 0 12 10"><path d="M0.5 0.5 H8.8 L11.5 3.2 V9.5 H0.5 Z" fill="#ededf3" stroke="#aaa6ba" stroke-width="0.9"/><path d="M8.8 0.5 V3.2 H11.5" fill="none" stroke="#c4c0d0" stroke-width="0.7"/><path d="M2 6.8 C2.9 2.2,4 2,5 4.8 S7.6 8.2,9.9 3" fill="none" stroke="#4078f0" stroke-width="1.1"/></svg>
<div class="t" style="left:345px;top:361.1px;">Максимальное абсолютное добавочное время впрыска (slow)</div>
<div class="t" style="left:591px;top:361.1px;">2D график</div>
<div class="t" style="left:656.5px;top:361.1px;">мс</div>
<div class="t" style="left:704.6px;top:361.1px;">f (Время впрыска)</div>
</div>
<div style="position:absolute;left:0;top:0;width:325px;height:442px;overflow:hidden">
<div style="position:absolute;left:34.1px;top:113.41px;width:7px;height:1px;background:#dcdcdc;"></div>
<div style="position:absolute;left:34.1px;top:125.12px;width:7px;height:1px;background:#dcdcdc;"></div>
<div style="position:absolute;left:34.1px;top:136.83px;width:7px;height:1px;background:#dcdcdc;"></div>
<div style="position:absolute;left:48.2px;top:148.54px;width:7px;height:1px;background:#dcdcdc;"></div>
<div style="position:absolute;left:62.3px;top:160.25px;width:7px;height:1px;background:#dcdcdc;"></div>
<div style="position:absolute;left:62.3px;top:171.96px;width:7px;height:1px;background:#dcdcdc;"></div>
<div style="position:absolute;left:34.1px;top:183.67px;width:7px;height:1px;background:#dcdcdc;"></div>
<div style="position:absolute;left:34.1px;top:195.38px;width:7px;height:1px;background:#dcdcdc;"></div>
<div style="position:absolute;left:34.1px;top:207.09px;width:7px;height:1px;background:#dcdcdc;"></div>
<div style="position:absolute;left:34.1px;top:218.8px;width:7px;height:1px;background:#dcdcdc;"></div>
<div style="position:absolute;left:48.2px;top:230.51px;width:7px;height:1px;background:#dcdcdc;"></div>
<div style="position:absolute;left:62.3px;top:242.22px;width:7px;height:1px;background:#dcdcdc;"></div>
<div style="position:absolute;left:62.3px;top:253.93px;width:7px;height:1px;background:#dcdcdc;"></div>
<div style="position:absolute;left:62.3px;top:265.64px;width:7px;height:1px;background:#dcdcdc;"></div>
<div style="position:absolute;left:76.4px;top:277.35px;width:7px;height:1px;background:#dcdcdc;"></div>
<div style="position:absolute;left:48.2px;top:289.06px;width:7px;height:1px;background:#dcdcdc;"></div>
<div style="position:absolute;left:62.3px;top:300.77px;width:7px;height:1px;background:#dcdcdc;"></div>
<div style="position:absolute;left:62.3px;top:312.48px;width:7px;height:1px;background:#dcdcdc;"></div>
<div style="position:absolute;left:62.3px;top:324.19px;width:7px;height:1px;background:#dcdcdc;"></div>
<div style="position:absolute;left:48.2px;top:335.9px;width:7px;height:1px;background:#dcdcdc;"></div>
<div style="position:absolute;left:34.1px;top:347.61px;width:7px;height:1px;background:#dcdcdc;"></div>
<div style="position:absolute;left:34.1px;top:359.32px;width:7px;height:1px;background:#dcdcdc;"></div>
<div style="position:absolute;left:48.2px;top:371.03px;width:7px;height:1px;background:#dcdcdc;"></div>
<div style="position:absolute;left:48.2px;top:382.74px;width:7px;height:1px;background:#dcdcdc;"></div>
<div style="position:absolute;left:48.2px;top:394.45px;width:7px;height:1px;background:#dcdcdc;"></div>
<div style="position:absolute;left:48.2px;top:406.16px;width:7px;height:1px;background:#dcdcdc;"></div>
<div style="position:absolute;left:48.2px;top:417.87px;width:7px;height:1px;background:#dcdcdc;"></div>
<div style="position:absolute;left:48.2px;top:429.58px;width:7px;height:1px;background:#dcdcdc;"></div>
<div style="position:absolute;left:34.1px;top:106.7px;width:1px;height:252.62px;background:#dcdcdc;"></div>
<div style="position:absolute;left:48.2px;top:141.83px;width:1px;height:6.71px;background:#dcdcdc;"></div>
<div style="position:absolute;left:62.3px;top:153.54px;width:1px;height:18.42px;background:#dcdcdc;"></div>
<div style="position:absolute;left:48.2px;top:223.8px;width:1px;height:112.1px;background:#dcdcdc;"></div>
<div style="position:absolute;left:62.3px;top:235.51px;width:1px;height:30.13px;background:#dcdcdc;"></div>
<div style="position:absolute;left:76.4px;top:270.64px;width:1px;height:6.71px;background:#dcdcdc;"></div>
<div style="position:absolute;left:62.3px;top:294.06px;width:1px;height:30.13px;background:#dcdcdc;"></div>
<div style="position:absolute;left:48.2px;top:364.32px;width:1px;height:65.26px;background:#dcdcdc;"></div>
<svg style="left:29px;top:95.5px" width="10" height="12" viewBox="0 0 10 12"><path d="M1 0.6 H6.5 L9.4 3.5 V11.3 H1 Z" fill="#f6f6f6" stroke="#9c9c9c" stroke-width="0.9"/><path d="M6.5 0.6 V3.5 H9.4" fill="none" stroke="#b0b0b0" stroke-width="0.8"/><path d="M2.8 5.5 H7.5 M2.8 7.5 H7.5" stroke="#d0d0d0" stroke-width="0.7"/></svg>
<svg style="left:16.9px;top:98.1px" width="7" height="7" viewBox="0 0 7 7"><defs><linearGradient id="mg" x1="0" y1="0" x2="0" y2="1"><stop offset="0" stop-color="#fdfdfb"/><stop offset="0.6" stop-color="#ecebe4"/><stop offset="1" stop-color="#c6c2b0"/></linearGradient></defs><rect x="0.5" y="0.5" width="6" height="6" rx="1" fill="url(#mg)" stroke="#98a8bc" stroke-width="0.9"/><rect x="1.6" y="3" width="3.8" height="1.1" fill="#1a1a1a"/></svg>
<div class="t" style="left:42.5px;top:96.1px;">Калибровки ПО</div>
<svg style="left:41.8px;top:108.21px" width="12" height="10" viewBox="0 0 12 10"><path d="M0.7 0.9 H4.3 L5.4 2 H11.2 V9.3 H0.7 Z" fill="#ffe600" stroke="#38445c" stroke-width="1.05"/><path d="M1.3 2.9 H10.6" stroke="#f0c000" stroke-width="0.7"/><path d="M1.3 3.8 H10.6" stroke="#fff24a" stroke-width="0.6"/></svg>
<div class="t" style="left:56.6px;top:107.81px;">Идентификаторы</div>
<svg style="left:41.8px;top:119.92px" width="12" height="10" viewBox="0 0 12 10"><path d="M0.7 0.9 H4.3 L5.4 2 H11.2 V9.3 H0.7 Z" fill="#ffe600" stroke="#38445c" stroke-width="1.05"/><path d="M1.3 2.9 H10.6" stroke="#f0c000" stroke-width="0.7"/><path d="M1.3 3.8 H10.6" stroke="#fff24a" stroke-width="0.6"/></svg>
<div class="t" style="left:56.6px;top:119.52px;">Маска DTC</div>
<svg style="left:41.8px;top:131.63px" width="12" height="10" viewBox="0 0 12 10"><path d="M0.7 0.9 H4.3 L5.4 2 H11.2 V9.3 H0.7 Z" fill="#ffe600" stroke="#38445c" stroke-width="1.05"/><path d="M1.3 2.9 H10.6" stroke="#f0c000" stroke-width="0.7"/><path d="M1.3 3.8 H10.6" stroke="#fff24a" stroke-width="0.6"/></svg>
<svg style="left:31.0px;top:133.23px" width="7" height="7" viewBox="0 0 7 7"><defs><linearGradient id="mg" x1="0" y1="0" x2="0" y2="1"><stop offset="0" stop-color="#fdfdfb"/><stop offset="0.6" stop-color="#ecebe4"/><stop offset="1" stop-color="#c6c2b0"/></linearGradient></defs><rect x="0.5" y="0.5" width="6" height="6" rx="1" fill="url(#mg)" stroke="#98a8bc" stroke-width="0.9"/><rect x="1.6" y="3" width="3.8" height="1.1" fill="#1a1a1a"/></svg>
<div class="t" style="left:56.6px;top:131.23px;">Пуск</div>
<svg style="left:55.9px;top:143.34px" width="12" height="10" viewBox="0 0 12 10"><path d="M0.7 0.9 H4.3 L5.4 2 H11.2 V9.3 H0.7 Z" fill="#ffe600" stroke="#38445c" stroke-width="1.05"/><path d="M1.3 2.9 H10.6" stroke="#f0c000" stroke-width="0.7"/><path d="M1.3 3.8 H10.6" stroke="#fff24a" stroke-width="0.6"/></svg>
<svg style="left:45.1px;top:144.94px" width="7" height="7" viewBox="0 0 7 7"><defs><linearGradient id="mg" x1="0" y1="0" x2="0" y2="1"><stop offset="0" stop-color="#fdfdfb"/><stop offset="0.6" stop-color="#ecebe4"/><stop offset="1" stop-color="#c6c2b0"/></linearGradient></defs><rect x="0.5" y="0.5" width="6" height="6" rx="1" fill="url(#mg)" stroke="#98a8bc" stroke-width="0.9"/><rect x="1.6" y="3" width="3.8" height="1.1" fill="#1a1a1a"/></svg>
<div class="t" style="left:70.7px;top:142.94px;">Коррекция при выходе из пуска</div>
<svg style="left:70.0px;top:155.05px" width="12" height="10" viewBox="0 0 12 10"><path d="M0.7 0.9 H4.3 L5.4 2 H11.2 V9.3 H0.7 Z" fill="#ffe600" stroke="#38445c" stroke-width="1.05"/><path d="M1.3 2.9 H10.6" stroke="#f0c000" stroke-width="0.7"/><path d="M1.3 3.8 H10.6" stroke="#fff24a" stroke-width="0.6"/></svg>
<div class="t" style="left:84.8px;top:154.65px;">Коррекция времени впрыска</div>
<svg style="left:70.0px;top:166.76px" width="12" height="10" viewBox="0 0 12 10"><path d="M0.7 0.9 H4.3 L5.4 2 H11.2 V9.3 H0.7 Z" fill="#ffe600" stroke="#38445c" stroke-width="1.05"/><path d="M1.3 2.9 H10.6" stroke="#f0c000" stroke-width="0.7"/><path d="M1.3 3.8 H10.6" stroke="#fff24a" stroke-width="0.6"/></svg>
<div class="t" style="left:84.8px;top:166.36px;">Коррекция УОЗ</div>
<svg style="left:41.8px;top:178.47px" width="12" height="10" viewBox="0 0 12 10"><path d="M0.7 0.9 H4.3 L5.4 2 H11.2 V9.3 H0.7 Z" fill="#ffe600" stroke="#38445c" stroke-width="1.05"/><path d="M1.3 2.9 H10.6" stroke="#f0c000" stroke-width="0.7"/><path d="M1.3 3.8 H10.6" stroke="#fff24a" stroke-width="0.6"/></svg>
<div class="t" style="left:56.6px;top:178.07px;">Прогрев</div>
<svg style="left:41.8px;top:190.18px" width="12" height="10" viewBox="0 0 12 10"><path d="M0.7 0.9 H4.3 L5.4 2 H11.2 V9.3 H0.7 Z" fill="#ffe600" stroke="#38445c" stroke-width="1.05"/><path d="M1.3 2.9 H10.6" stroke="#f0c000" stroke-width="0.7"/><path d="M1.3 3.8 H10.6" stroke="#fff24a" stroke-width="0.6"/></svg>
<div class="t" style="left:56.6px;top:189.78px;">Холостой ход</div>
<svg style="left:41.8px;top:201.89px" width="12" height="10" viewBox="0 0 12 10"><path d="M0.7 0.9 H4.3 L5.4 2 H11.2 V9.3 H0.7 Z" fill="#ffe600" stroke="#38445c" stroke-width="1.05"/><path d="M1.3 2.9 H10.6" stroke="#f0c000" stroke-width="0.7"/><path d="M1.3 3.8 H10.6" stroke="#fff24a" stroke-width="0.6"/></svg>
<div class="t" style="left:56.6px;top:201.49px;">Диспетчер режимов</div>
<svg style="left:41.8px;top:213.6px" width="12" height="10" viewBox="0 0 12 10"><path d="M0.7 0.9 H4.3 L5.4 2 H11.2 V9.3 H0.7 Z" fill="#ffe600" stroke="#38445c" stroke-width="1.05"/><path d="M1.3 2.9 H10.6" stroke="#f0c000" stroke-width="0.7"/><path d="M1.3 3.8 H10.6" stroke="#fff24a" stroke-width="0.6"/></svg>
<svg style="left:31.0px;top:215.2px" width="7" height="7" viewBox="0 0 7 7"><defs><linearGradient id="mg" x1="0" y1="0" x2="0" y2="1"><stop offset="0" stop-color="#fdfdfb"/><stop offset="0.6" stop-color="#ecebe4"/><stop offset="1" stop-color="#c6c2b0"/></linearGradient></defs><rect x="0.5" y="0.5" width="6" height="6" rx="1" fill="url(#mg)" stroke="#98a8bc" stroke-width="0.9"/><rect x="1.6" y="3" width="3.8" height="1.1" fill="#1a1a1a"/></svg>
<div class="t" style="left:56.6px;top:213.2px;">Рабочие режимы</div>
<svg style="left:55.9px;top:225.31px" width="12" height="10" viewBox="0 0 12 10"><path d="M0.7 0.9 H4.3 L5.4 2 H11.2 V9.3 H0.7 Z" fill="#ffe600" stroke="#38445c" stroke-width="1.05"/><path d="M1.3 2.9 H10.6" stroke="#f0c000" stroke-width="0.7"/><path d="M1.3 3.8 H10.6" stroke="#fff24a" stroke-width="0.6"/></svg>
<svg style="left:45.1px;top:226.91px" width="7" height="7" viewBox="0 0 7 7"><defs><linearGradient id="mg" x1="0" y1="0" x2="0" y2="1"><stop offset="0" stop-color="#fdfdfb"/><stop offset="0.6" stop-color="#ecebe4"/><stop offset="1" stop-color="#c6c2b0"/></linearGradient></defs><rect x="0.5" y="0.5" width="6" height="6" rx="1" fill="url(#mg)" stroke="#98a8bc" stroke-width="0.9"/><rect x="1.6" y="3" width="3.8" height="1.1" fill="#1a1a1a"/></svg>
<div class="t" style="left:70.7px;top:224.91px;">Топливоподача</div>
<svg style="left:70.0px;top:237.02px" width="12" height="10" viewBox="0 0 12 10"><path d="M0.7 0.9 H4.3 L5.4 2 H11.2 V9.3 H0.7 Z" fill="#ffe600" stroke="#38445c" stroke-width="1.05"/><path d="M1.3 2.9 H10.6" stroke="#f0c000" stroke-width="0.7"/><path d="M1.3 3.8 H10.6" stroke="#fff24a" stroke-width="0.6"/></svg>
<div class="t" style="left:84.8px;top:236.62px;">Обогащение при детонации</div>
<svg style="left:70.0px;top:248.73px" width="12" height="10" viewBox="0 0 12 10"><path d="M0.7 0.9 H4.3 L5.4 2 H11.2 V9.3 H0.7 Z" fill="#ffe600" stroke="#38445c" stroke-width="1.05"/><path d="M1.3 2.9 H10.6" stroke="#f0c000" stroke-width="0.7"/><path d="M1.3 3.8 H10.6" stroke="#fff24a" stroke-width="0.6"/></svg>
<div class="t" style="left:84.8px;top:248.33px;">Послепусковая коррекция времени впрыска</div>
<div style="position:absolute;left:84.2px;top:259.14px;width:183px;height:11.4px;background:#eeebdf;"></div>
<svg style="left:70.0px;top:260.44px" width="12" height="10" viewBox="0 0 12 10"><path d="M0.7 0.9 H4.3 L5.4 2 H11.2 V9.3 H0.7 Z" fill="#ffe600" stroke="#38445c" stroke-width="1.05"/><path d="M1.3 2.9 H10.6" stroke="#f0c000" stroke-width="0.7"/><path d="M1.3 3.8 H10.6" stroke="#fff24a" stroke-width="0.6"/></svg>
<svg style="left:59.2px;top:262.04px" width="7" height="7" viewBox="0 0 7 7"><defs><linearGradient id="mg" x1="0" y1="0" x2="0" y2="1"><stop offset="0" stop-color="#fdfdfb"/><stop offset="0.6" stop-color="#ecebe4"/><stop offset="1" stop-color="#c6c2b0"/></linearGradient></defs><rect x="0.5" y="0.5" width="6" height="6" rx="1" fill="url(#mg)" stroke="#98a8bc" stroke-width="0.9"/><rect x="1.6" y="3" width="3.8" height="1.1" fill="#1a1a1a"/></svg>
<div class="t" style="left:84.8px;top:260.04px;">Динамическая коррекция переходных режимов</div>
<svg style="left:84.1px;top:272.15px" width="12" height="10" viewBox="0 0 12 10"><path d="M0.7 0.9 H4.3 L5.4 2 H11.2 V9.3 H0.7 Z" fill="#ffe600" stroke="#38445c" stroke-width="1.05"/><path d="M1.3 2.9 H10.6" stroke="#f0c000" stroke-width="0.7"/><path d="M1.3 3.8 H10.6" stroke="#fff24a" stroke-width="0.6"/></svg>
<div class="t" style="left:98.9px;top:271.75px;">Послепусковая коррекция топливной плёнки</div>
<svg style="left:55.9px;top:283.86px" width="12" height="10" viewBox="0 0 12 10"><path d="M0.7 0.9 H4.3 L5.4 2 H11.2 V9.3 H0.7 Z" fill="#ffe600" stroke="#38445c" stroke-width="1.05"/><path d="M1.3 2.9 H10.6" stroke="#f0c000" stroke-width="0.7"/><path d="M1.3 3.8 H10.6" stroke="#fff24a" stroke-width="0.6"/></svg>
<svg style="left:45.1px;top:285.46px" width="7" height="7" viewBox="0 0 7 7"><defs><linearGradient id="mg" x1="0" y1="0" x2="0" y2="1"><stop offset="0" stop-color="#fdfdfb"/><stop offset="0.6" stop-color="#ecebe4"/><stop offset="1" stop-color="#c6c2b0"/></linearGradient></defs><rect x="0.5" y="0.5" width="6" height="6" rx="1" fill="url(#mg)" stroke="#98a8bc" stroke-width="0.9"/><rect x="1.6" y="3" width="3.8" height="1.1" fill="#1a1a1a"/></svg>
<div class="t" style="left:70.7px;top:283.46px;">УОЗ</div>
<svg style="left:70.0px;top:295.57px" width="12" height="10" viewBox="0 0 12 10"><path d="M0.7 0.9 H4.3 L5.4 2 H11.2 V9.3 H0.7 Z" fill="#ffe600" stroke="#38445c" stroke-width="1.05"/><path d="M1.3 2.9 H10.6" stroke="#f0c000" stroke-width="0.7"/><path d="M1.3 3.8 H10.6" stroke="#fff24a" stroke-width="0.6"/></svg>
<div class="t" style="left:84.8px;top:295.17px;">Динамическая коррекция УОЗ при резком открытии дросселя</div>
<svg style="left:70.0px;top:307.28px" width="12" height="10" viewBox="0 0 12 10"><path d="M0.7 0.9 H4.3 L5.4 2 H11.2 V9.3 H0.7 Z" fill="#ffe600" stroke="#38445c" stroke-width="1.05"/><path d="M1.3 2.9 H10.6" stroke="#f0c000" stroke-width="0.7"/><path d="M1.3 3.8 H10.6" stroke="#fff24a" stroke-width="0.6"/></svg>
<div class="t" style="left:84.8px;top:306.88px;">Динамическая коррекция УОЗ по dRPM (anti jerk)</div>
<svg style="left:70.0px;top:318.99px" width="12" height="10" viewBox="0 0 12 10"><path d="M0.7 0.9 H4.3 L5.4 2 H11.2 V9.3 H0.7 Z" fill="#ffe600" stroke="#38445c" stroke-width="1.05"/><path d="M1.3 2.9 H10.6" stroke="#f0c000" stroke-width="0.7"/><path d="M1.3 3.8 H10.6" stroke="#fff24a" stroke-width="0.6"/></svg>
<div class="t" style="left:84.8px;top:318.59px;">Динамическая коррекция УОЗ (torque intervention)</div>
<svg style="left:55.9px;top:330.7px" width="12" height="10" viewBox="0 0 12 10"><path d="M0.7 0.9 H4.3 L5.4 2 H11.2 V9.3 H0.7 Z" fill="#ffe600" stroke="#38445c" stroke-width="1.05"/><path d="M1.3 2.9 H10.6" stroke="#f0c000" stroke-width="0.7"/><path d="M1.3 3.8 H10.6" stroke="#fff24a" stroke-width="0.6"/></svg>
<div class="t" style="left:70.7px;top:330.3px;">Фаза впрыска</div>
<svg style="left:41.8px;top:342.41px" width="12" height="10" viewBox="0 0 12 10"><path d="M0.7 0.9 H4.3 L5.4 2 H11.2 V9.3 H0.7 Z" fill="#ffe600" stroke="#38445c" stroke-width="1.05"/><path d="M1.3 2.9 H10.6" stroke="#f0c000" stroke-width="0.7"/><path d="M1.3 3.8 H10.6" stroke="#fff24a" stroke-width="0.6"/></svg>
<div class="t" style="left:56.6px;top:342.01px;">Лямбда-регулирование</div>
<svg style="left:41.8px;top:354.12px" width="12" height="10" viewBox="0 0 12 10"><path d="M0.7 0.9 H4.3 L5.4 2 H11.2 V9.3 H0.7 Z" fill="#ffe600" stroke="#38445c" stroke-width="1.05"/><path d="M1.3 2.9 H10.6" stroke="#f0c000" stroke-width="0.7"/><path d="M1.3 3.8 H10.6" stroke="#fff24a" stroke-width="0.6"/></svg>
<svg style="left:31.0px;top:355.72px" width="7" height="7" viewBox="0 0 7 7"><defs><linearGradient id="mg" x1="0" y1="0" x2="0" y2="1"><stop offset="0" stop-color="#fdfdfb"/><stop offset="0.6" stop-color="#ecebe4"/><stop offset="1" stop-color="#c6c2b0"/></linearGradient></defs><rect x="0.5" y="0.5" width="6" height="6" rx="1" fill="url(#mg)" stroke="#98a8bc" stroke-width="0.9"/><rect x="1.6" y="3" width="3.8" height="1.1" fill="#1a1a1a"/></svg>
<div class="t" style="left:56.6px;top:353.72px;">Датчики и механизмы</div>
<svg style="left:55.9px;top:365.83px" width="12" height="10" viewBox="0 0 12 10"><path d="M0.7 0.9 H4.3 L5.4 2 H11.2 V9.3 H0.7 Z" fill="#ffe600" stroke="#38445c" stroke-width="1.05"/><path d="M1.3 2.9 H10.6" stroke="#f0c000" stroke-width="0.7"/><path d="M1.3 3.8 H10.6" stroke="#fff24a" stroke-width="0.6"/></svg>
<div class="t" style="left:70.7px;top:365.43px;">ДПДЗ</div>
<svg style="left:55.9px;top:377.54px" width="12" height="10" viewBox="0 0 12 10"><path d="M0.7 0.9 H4.3 L5.4 2 H11.2 V9.3 H0.7 Z" fill="#ffe600" stroke="#38445c" stroke-width="1.05"/><path d="M1.3 2.9 H10.6" stroke="#f0c000" stroke-width="0.7"/><path d="M1.3 3.8 H10.6" stroke="#fff24a" stroke-width="0.6"/></svg>
<div class="t" style="left:70.7px;top:377.14px;">ДАД</div>
<svg style="left:55.9px;top:389.25px" width="12" height="10" viewBox="0 0 12 10"><path d="M0.7 0.9 H4.3 L5.4 2 H11.2 V9.3 H0.7 Z" fill="#ffe600" stroke="#38445c" stroke-width="1.05"/><path d="M1.3 2.9 H10.6" stroke="#f0c000" stroke-width="0.7"/><path d="M1.3 3.8 H10.6" stroke="#fff24a" stroke-width="0.6"/></svg>
<div class="t" style="left:70.7px;top:388.85px;">Форсунки</div>
<svg style="left:55.9px;top:400.96px" width="12" height="10" viewBox="0 0 12 10"><path d="M0.7 0.9 H4.3 L5.4 2 H11.2 V9.3 H0.7 Z" fill="#ffe600" stroke="#38445c" stroke-width="1.05"/><path d="M1.3 2.9 H10.6" stroke="#f0c000" stroke-width="0.7"/><path d="M1.3 3.8 H10.6" stroke="#fff24a" stroke-width="0.6"/></svg>
<div class="t" style="left:70.7px;top:400.56px;">Система зажигания</div>
<svg style="left:55.9px;top:412.67px" width="12" height="10" viewBox="0 0 12 10"><path d="M0.7 0.9 H4.3 L5.4 2 H11.2 V9.3 H0.7 Z" fill="#ffe600" stroke="#38445c" stroke-width="1.05"/><path d="M1.3 2.9 H10.6" stroke="#f0c000" stroke-width="0.7"/><path d="M1.3 3.8 H10.6" stroke="#fff24a" stroke-width="0.6"/></svg>
<div class="t" style="left:70.7px;top:412.27px;">ДТОЖ</div>
<svg style="left:55.9px;top:424.38px" width="12" height="10" viewBox="0 0 12 10"><path d="M0.7 0.9 H4.3 L5.4 2 H11.2 V9.3 H0.7 Z" fill="#ffe600" stroke="#38445c" stroke-width="1.05"/><path d="M1.3 2.9 H10.6" stroke="#f0c000" stroke-width="0.7"/><path d="M1.3 3.8 H10.6" stroke="#fff24a" stroke-width="0.6"/></svg>
<div class="t" style="left:70.7px;top:423.98px;">ДТВ</div>
</div>
<div style="position:absolute;left:783px;top:38px;width:13px;height:404px;background:#f6f5ef;border-left:1px solid #eeede5;box-sizing:border-box;"></div>
<div style="position:absolute;left:784px;top:38px;width:11px;height:12px;background:linear-gradient(135deg,#dfe8fd 0%,#c3d3fb 60%,#b4c8f6 100%);border:1px solid #f4f7fe;border-radius:2px;box-sizing:border-box;"></div>
<svg style="left:784px;top:38px" width="11" height="12" viewBox="0 0 11 12"><path d="M2.8 7.2 L5.5 4.5 L8.2 7.2" fill="none" stroke="#4d6185" stroke-width="1.5"/></svg>
<div style="position:absolute;left:784px;top:50px;width:11px;height:309px;background:linear-gradient(90deg,#c9d8fc 0%,#c6d6fb 50%,#b9ccf7 100%);border:1px solid #f4f7fe;border-radius:2px;box-sizing:border-box;"></div>
<div style="position:absolute;left:787px;top:201px;width:5px;height:1px;background:#eef3fe;"></div>
<div style="position:absolute;left:787px;top:203px;width:5px;height:1px;background:#eef3fe;"></div>
<div style="position:absolute;left:787px;top:205px;width:5px;height:1px;background:#eef3fe;"></div>
<div style="position:absolute;left:787px;top:207px;width:5px;height:1px;background:#eef3fe;"></div>
<div style="position:absolute;left:784px;top:430px;width:11px;height:12px;background:linear-gradient(135deg,#dfe8fd 0%,#c3d3fb 60%,#b4c8f6 100%);border:1px solid #f4f7fe;border-radius:2px;box-sizing:border-box;"></div>
<svg style="left:784px;top:430px" width="11" height="12" viewBox="0 0 11 12"><path d="M2.8 4.8 L5.5 7.5 L8.2 4.8" fill="none" stroke="#4d6185" stroke-width="1.5"/></svg>
<div style="position:absolute;left:3px;top:442px;width:780px;height:13px;background:#f6f5ef;border-top:1px solid #eeede5;box-sizing:border-box;"></div>
<div style="position:absolute;left:4px;top:443px;width:12px;height:11px;background:linear-gradient(135deg,#dfe8fd 0%,#c3d3fb 60%,#b4c8f6 100%);border:1px solid #f4f7fe;border-radius:2px;box-sizing:border-box;"></div>
<svg style="left:4px;top:443px" width="12" height="11" viewBox="0 0 12 11"><path d="M7.2 2.8 L4.5 5.5 L7.2 8.2" fill="none" stroke="#4d6185" stroke-width="1.5"/></svg>
<div style="position:absolute;left:17px;top:443px;width:583px;height:11px;background:linear-gradient(180deg,#c9d8fc 0%,#c6d6fb 50%,#b9ccf7 100%);border:1px solid #f4f7fe;border-radius:2px;box-sizing:border-box;"></div>
<div style="position:absolute;left:306px;top:446px;width:1px;height:5px;background:#eef3fe;"></div>
<div style="position:absolute;left:308px;top:446px;width:1px;height:5px;background:#eef3fe;"></div>
<div style="position:absolute;left:310px;top:446px;width:1px;height:5px;background:#eef3fe;"></div>
<div style="position:absolute;left:312px;top:446px;width:1px;height:5px;background:#eef3fe;"></div>
<div style="position:absolute;left:771px;top:443px;width:11px;height:11px;background:linear-gradient(135deg,#dfe8fd 0%,#c3d3fb 60%,#b4c8f6 100%);border:1px solid #f4f7fe;border-radius:2px;box-sizing:border-box;"></div>
<svg style="left:771px;top:443px" width="11" height="11" viewBox="0 0 11 11"><path d="M4.3 2.8 L7 5.5 L4.3 8.2" fill="none" stroke="#4d6185" stroke-width="1.5"/></svg>
<div style="position:absolute;left:783px;top:442px;width:13px;height:13px;background:#f2f1ea;"></div>
<div style="position:absolute;left:795.5px;top:37px;width:1.5px;height:418px;background:#fbfbfb;"></div>
<div style="position:absolute;left:0px;top:466px;width:800px;height:7px;background:linear-gradient(180deg,#0a4ce0 0%,#0846d6 50%,#0030b0 100%);"></div>
<div style="position:absolute;left:3px;top:455px;width:793px;height:15px;background:linear-gradient(180deg,#f8f7f2 0px,#f8f7f2 1px,#9e9a88 1px,#9e9a88 2px,#ece9d8 2px,#ebe8d6 12px,#dcd8c4 13.5px,#ece9d8 15px);"></div>
<div style="position:absolute;left:793px;top:461px;width:2px;height:2px;background:#c2bfb0;"></div>
<div style="position:absolute;left:793px;top:464px;width:2px;height:2px;background:#c2bfb0;"></div>
<div style="position:absolute;left:790px;top:464px;width:2px;height:2px;background:#c2bfb0;"></div>
<div style="position:absolute;left:793px;top:467px;width:2px;height:2px;background:#c2bfb0;"></div>
<div style="position:absolute;left:790px;top:467px;width:2px;height:2px;background:#c2bfb0;"></div>
<div style="position:absolute;left:787px;top:467px;width:2px;height:2px;background:#c2bfb0;"></div></body></html>
